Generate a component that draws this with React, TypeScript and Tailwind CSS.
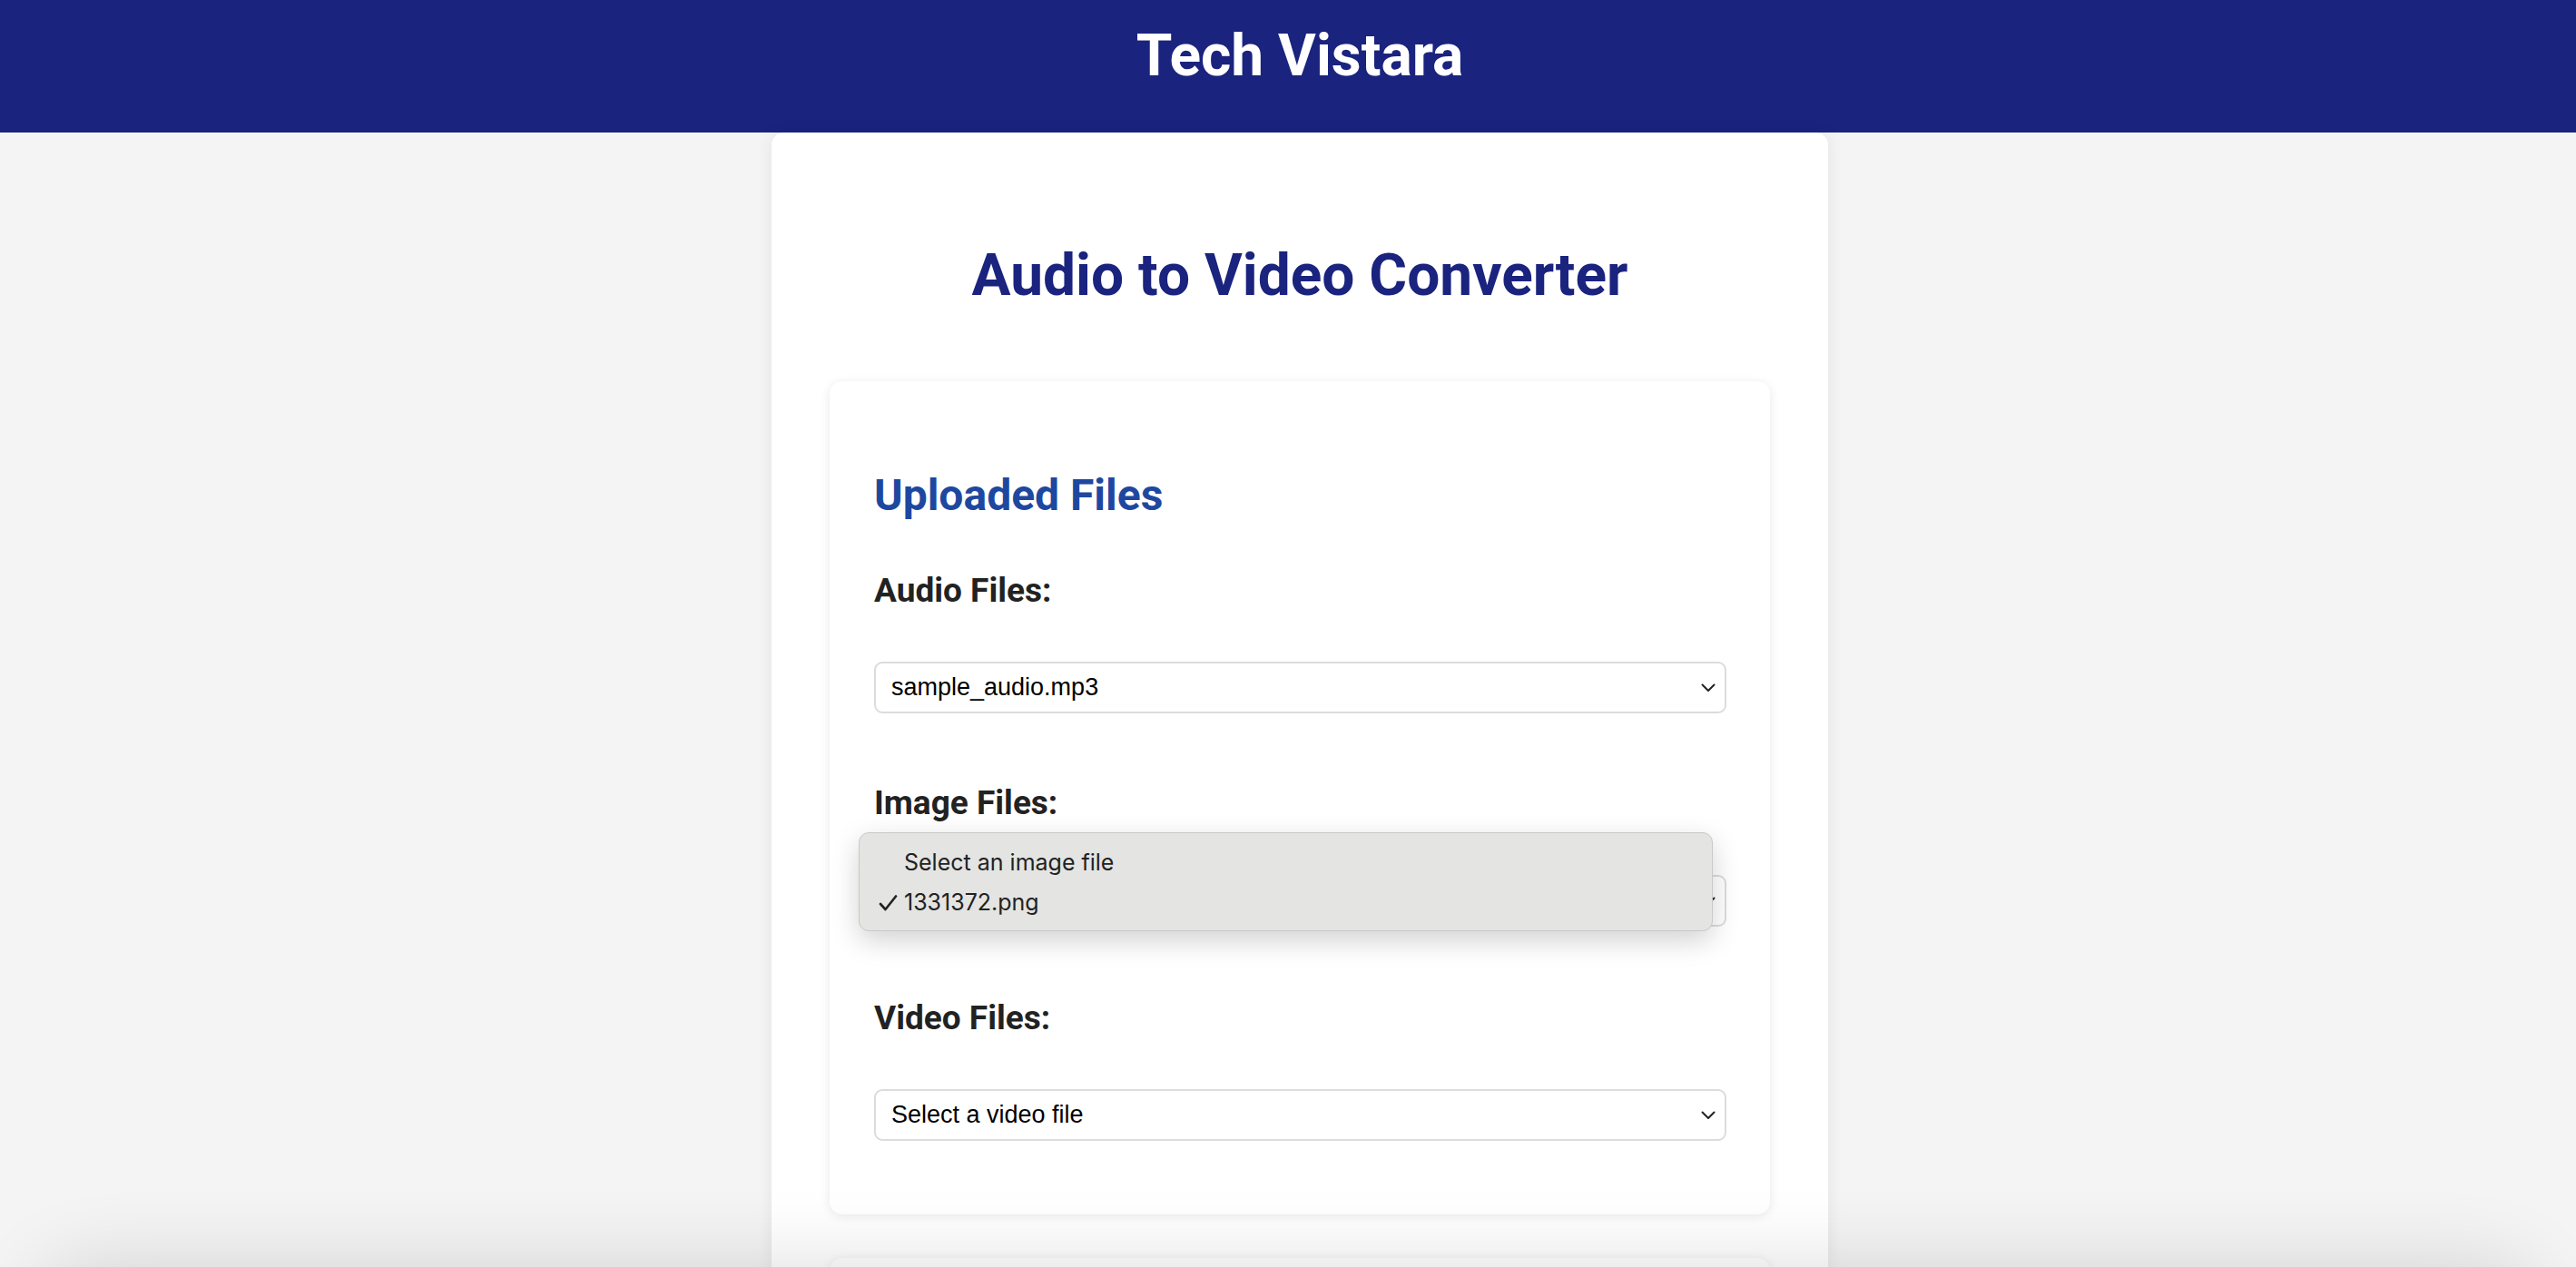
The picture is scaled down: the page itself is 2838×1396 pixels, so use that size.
import React from 'react';

const Chevron = () => (
  <svg width="16" height="10" viewBox="0 0 16 10" fill="none" className="shrink-0">
    <path d="M1.5 1.5L8 8L14.5 1.5" stroke="#222" strokeWidth="2" strokeLinecap="round" strokeLinejoin="round" />
  </svg>
);

const FakeSelect: React.FC<{ value: string }> = ({ value }) => (
  <div className="flex h-[57px] items-center justify-between rounded-[9px] border-2 border-[#dcdcdc] bg-white pl-[17px] pr-[10px]">
    <span className="font-['Liberation_Sans',Arial,sans-serif] text-[27px] leading-none text-black">{value}</span>
    <Chevron />
  </div>
);

const Label: React.FC<{ children: React.ReactNode; className?: string }> = ({ children, className }) => (
  <h3 className={`text-[37px] font-bold leading-none text-[#222] ${className ?? ''}`}>{children}</h3>
);

export default function App() {
  return (
    <div className="min-h-screen bg-[#f4f4f4] font-['Roboto',sans-serif]">
      <header className="h-[146px] bg-[#1a237e] pl-[26px] pt-[30px] text-center">
        <h1 className="text-[64px] font-bold leading-none text-white">Tech Vistara</h1>
      </header>

      <div className="pl-[26px]">
        <main className="mx-auto w-[1164px] rounded-[14px] bg-white px-[64px] pt-[126px] pb-[64px] shadow-[0_0_18px_rgba(0,0,0,0.07)]">
          <h1 className="text-center text-[64px] font-bold leading-none text-[#1a237e]">Audio to Video Converter</h1>

          <section className="mt-[84px] rounded-[14px] bg-white pl-[49px] pr-[48px] pt-[102px] pb-[81px] shadow-[0_2px_12px_rgba(0,0,0,0.09)]">
            <h2 className="text-[48px] font-bold leading-none text-[#1e48a0]">Uploaded Files</h2>

            <Label className="mt-[62px]">Audio Files:</Label>
            <div className="mt-[60px]">
              <FakeSelect value="sample_audio.mp3" />
            </div>

            <Label className="mt-[80px]">Image Files:</Label>
            <div className="relative mt-[61px]">
              <FakeSelect value="1331372.png" />
              {/* open native menu */}
              <div className="absolute left-[-17px] right-[15px] top-[-47px] z-10 flex h-[109px] flex-col rounded-[11px] border border-[#c9c9c9] bg-[#e4e4e2] pt-[20px] font-['Inter',sans-serif] text-[25px] leading-none text-[#222] shadow-[0_10px_30px_rgba(0,0,0,0.18)]">
                <div className="flex items-center pl-[49px]">Select an image file</div>
                <div className="mt-[19px] flex items-center">
                  <svg width="21" height="18" viewBox="0 0 21 18" className="ml-[21px] mr-[7px]">
                    <path d="M2 10L7.5 16L19 1.5" fill="none" stroke="#222" strokeWidth="2.6" strokeLinecap="round" strokeLinejoin="round" />
                  </svg>
                  <span>1331372.png</span>
                </div>
              </div>
            </div>

            <Label className="mt-[82px]">Video Files:</Label>
            <div className="mt-[60px]">
              <FakeSelect value="Select a video file" />
            </div>
          </section>

          <section className="mt-[48px] h-[420px] rounded-[14px] bg-white shadow-[0_2px_12px_rgba(0,0,0,0.09)]" />
        </main>
      </div>

      {/* shadow rising from below the viewport */}
      <div className="pointer-events-none fixed inset-x-[40px] bottom-[-120px] h-[120px] rounded-[60px] shadow-[0_0_90px_rgba(0,0,0,0.14)]" />
    </div>
  );
}
